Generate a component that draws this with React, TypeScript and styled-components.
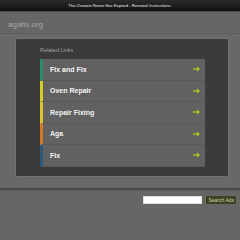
import styled, { createGlobalStyle } from 'styled-components';

const GlobalStyle = createGlobalStyle`
	html, body {
		margin: 0;
		padding: 0;
		background: #666666;
		font-family: "Liberation Sans", Arial, sans-serif;
	}
`;

const TopBar = styled.div`
	height: 11px;
	background: linear-gradient(#2a2a2a, #111111);
	border-bottom: 1px solid #444;
	display: flex;
	align-items: center;
	justify-content: center;
	font-size: 4.2px;
	color: #e8e8e8;
`;

const Header = styled.div`
	height: 22px;
	padding: 4px 8px 0;
	box-sizing: border-box;
	display: flex;
	align-items: center;
	border-bottom: 1px solid #5c5c5c;
	font-size: 8px;
	color: #a8a8a8;
`;

const Main = styled.div`
	background: #686868;
	padding: 4px 11px 11px 15px;
	box-shadow: 0 2px 2px rgba(0, 0, 0, 0.35);
`;

const Panel = styled.div`
	background: #3b3b3b;
	border: 1px solid #727272;
	border-radius: 2px;
	padding: 8px 23px 9px 24px;
`;

const PanelTitle = styled.div`
	font-size: 5.5px;
	color: #a0a0a0;
	height: 12px;
	line-height: 7px;
`;

const List = styled.div`
	display: flex;
	flex-direction: column;
`;

const Item = styled.div<{ $accent: string }>`
	height: 20.5px;
	display: flex;
	align-items: center;
	justify-content: space-between;
	background: #616161;
	border-left: 3px solid ${p => p.$accent};
	border-bottom: 1px solid #585858;
	padding: 0 5px 0 7px;
	font-size: 7px;
	font-weight: 700;
	color: #f4f4f4;
`;

const SearchRow = styled.div`
	display: flex;
	justify-content: flex-end;
	align-items: center;
	gap: 4px;
	padding: 8px 4px 0 0;
`;

const SearchInput = styled.div`
	width: 57px;
	height: 6px;
	background: #ffffff;
	border: 1px solid #dddddd;
`;

const SearchButton = styled.div`
	height: 8px;
	padding: 0 2px;
	display: flex;
	align-items: center;
	background: #3c4226;
	color: #c9d6a4;
	font-size: 5px;
`;

const Arrow = () => (
	<svg width="7" height="6" viewBox="0 0 7 6">
		<path d="M0 2.2h4V0.3L7 3 4 5.7V3.8H0z" fill="#a3c21d" />
	</svg>
);

const links = [
	{ name: 'Fix and Fix', accent: '#2e8a68' },
	{ name: 'Oven Repair', accent: '#d4cc28' },
	{ name: 'Repair Fixing', accent: '#dcc22c' },
	{ name: 'Aga', accent: '#cf7a2a' },
	{ name: 'Fix', accent: '#2b5a7e' },
];

const App = () => {
	return (
		<>
			<GlobalStyle />
			<TopBar>This Domain Name Has Expired - Renewal Instructions.</TopBar>
			<Header>agafix.org</Header>
			<Main>
				<Panel>
					<PanelTitle>Related Links</PanelTitle>
					<List>
						{links.map(link => (
							<Item key={link.name} $accent={link.accent}>
								{link.name}
								<Arrow />
							</Item>
						))}
					</List>
				</Panel>
			</Main>
			<SearchRow>
				<SearchInput />
				<SearchButton>Search Ads</SearchButton>
			</SearchRow>
		</>
	);
};

export default App;
